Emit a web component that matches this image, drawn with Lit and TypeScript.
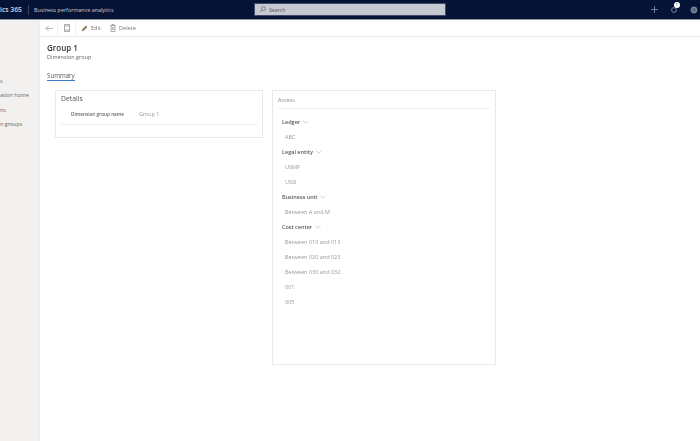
import { LitElement, html, css } from "lit";
import { customElement } from "lit/decorators.js";

const chevron = html`<svg class="chev" width="6" height="4" viewBox="0 0 6 4"><path d="M.4.8l2.6 2.4L5.6.8" fill="none" stroke="#b0b0b0" stroke-width=".6"/></svg>`;

const groups: [string, string[]][] = [
  ["Ledger", ["ABC"]],
  ["Legal entity", ["USMF", "USSI"]],
  ["Business unit", ["Between A and M"]],
  ["Cost center", ["Between 010 and 013", "Between 020 and 023", "Between 030 and 032", "001", "005"]],
];

@customElement("app-root")
export class AppRoot extends LitElement {
  static styles = css`
    :host { display: block; width: 700px; height: 441px; overflow: hidden; background: #fff; font-family: "Open Sans", "Noto Sans", sans-serif; color: #333; }
    .frame { height: 441px; display: flex; flex-direction: column; filter: blur(0.45px); }
    header { height: 20px; flex: none; background: #051436; border-bottom: 1px solid #8d93a5; box-sizing: border-box; display: flex; align-items: center; color: #c9ced8; font-size: 5.4px; }
    .brand { font-size: 6.8px; font-weight: 600; width: 28px; white-space: nowrap; color: #d5d8df; }
    .sep { width: 1px; height: 10px; background: #3b4660; }
    .app { margin-left: 5px; width: 220px; white-space: nowrap; }
    .search { width: 192px; height: 13px; background: #c6c9d0; border: 1px solid #3e4a68; box-sizing: border-box; display: flex; align-items: center; gap: 3px; padding-left: 4px; color: #4a4f5c; font-size: 5.2px; }
    .right { margin-left: auto; display: flex; align-items: center; gap: 13px; padding-right: 2px; }
    .bell { position: relative; display: flex; }
    .badge { position: absolute; top: -5px; left: 3px; width: 6px; height: 6px; border-radius: 50%; background: #fff; color: #051436; font-size: 4px; line-height: 6px; text-align: center; }
    .body { flex: 1; display: flex; min-height: 0; }
    nav { width: 40px; flex: none; background: #f2f1f0; border-right: 1px solid #ecebea; box-sizing: border-box; padding-top: 57px; font-size: 5.4px; color: #666; display: flex; flex-direction: column; gap: 6.4px; line-height: 8px; white-space: nowrap; }
    main { flex: 1; min-width: 0; }
    .toolbar { height: 17px; border-bottom: 1px solid #eceaea; box-sizing: border-box; display: flex; align-items: center; font-size: 5.6px; color: #777; }
    .tool { display: flex; align-items: center; gap: 3px; }
    .back { width: 17px; justify-content: center; border-right: 1px solid #f0f0f0; height: 100%; }
    .pg { width: 17px; justify-content: center; border-right: 1px solid #f0f0f0; height: 100%; }
    .edit { margin-left: 5px; }
    .del { margin-left: 9px; }
    .content { padding: 5px 0 0 7px; }
    h1 { margin: 0; font-size: 8px; line-height: 11px; font-weight: 600; color: #333; }
    .sub { font-size: 5.5px; line-height: 8px; color: #666; }
    .tab { display: inline-block; margin-top: 10px; font-size: 6.2px; line-height: 8px; color: #555; border-bottom: 1px solid #3a7bd0; }
    .cards { display: flex; align-items: flex-start; margin: 7px 0 0 8px; gap: 9px; }
    .card { background: #fff; border: 1px solid #eae9e8; box-sizing: border-box; }
    .details { width: 208px; height: 48px; padding: 3px 5px; }
    .details h2 { margin: 0; font-size: 6.8px; line-height: 10px; font-weight: 400; color: #555; }
    .field { display: flex; align-items: center; height: 12px; margin-top: 4px; padding-left: 10px; border-bottom: 1px solid #efefef; padding-bottom: 4px; box-sizing: content-box; }
    .field .l { width: 68px; font-size: 4.7px; font-weight: 600; color: #666; }
    .field .v { font-size: 5.4px; color: #999; }
    .access { width: 224px; height: 275px; padding: 5px 5px 0; }
    .access h3 { margin: 0; font-size: 5.4px; line-height: 8px; font-weight: 400; color: #888; padding-bottom: 4px; border-bottom: 1px solid #f0efef; }
    .list { padding: 5px 0 0 4px; }
    .g { display: flex; align-items: center; gap: 3px; height: 15px; font-size: 5.5px; font-weight: 600; color: #5a5a5a; }
    .i { height: 15px; display: flex; align-items: center; padding-left: 3px; font-size: 5.5px; color: #999; }
  `;

  render() {
    return html`<div class="frame">
      <header>
        <div class="brand">ics 365</div><div class="sep"></div>
        <div class="app">Business performance analytics</div>
        <div class="search">
          <svg width="7" height="7" viewBox="0 0 8 8"><circle cx="5" cy="3" r="2.3" fill="none" stroke="#555" stroke-width=".7"/><path d="M3.3 4.7L1 7" stroke="#555" stroke-width=".7"/></svg>
          Search
        </div>
        <div class="right">
          <svg width="7" height="7" viewBox="0 0 7 7"><path d="M3.5 0v7M0 3.5h7" stroke="#8a92a6" stroke-width=".8"/></svg>
          <span class="bell"><svg width="6" height="6" viewBox="0 0 6 6"><circle cx="3" cy="3" r="2.4" fill="none" stroke="#9aa1b2" stroke-width=".8"/></svg><span class="badge">1</span></span>
          <svg width="8" height="8" viewBox="0 0 8 8"><circle cx="4" cy="4" r="3.4" fill="#5b647d"/><circle cx="4" cy="4" r="2.6" fill="none" stroke="#8b92a5" stroke-width=".9"/></svg>
        </div>
      </header>
      <div class="body">
        <nav><div>s</div><div>ation home</div><div>ns</div><div>n groups</div></nav>
        <main>
          <div class="toolbar">
            <div class="tool back"><svg width="8" height="7" viewBox="0 0 8 7"><path d="M8 3.5H1M3.7.8L1 3.5l2.7 2.7" fill="none" stroke="#999" stroke-width=".7"/></svg></div>
            <div class="tool pg"><svg width="6" height="8" viewBox="0 0 6 8"><path d="M.5.5h5v7h-5zM.5 2h5M.5 6h5" fill="none" stroke="#888" stroke-width=".7"/></svg></div>
            <div class="tool edit"><svg width="7" height="7" viewBox="0 0 7 7"><path d="M.5 6.5l1-2.5L5 .6l1.4 1.4L3 5.5z" fill="#8a7a55"/></svg>Edit</div>
            <div class="tool del"><svg width="6" height="8" viewBox="0 0 6 8"><path d="M.4 1.5h5.2M1 1.5v6h4v-6M2 1.5V.5h2v1M2.3 3v3M3.7 3v3" fill="none" stroke="#777" stroke-width=".6"/></svg>Delete</div>
          </div>
          <div class="content">
            <h1>Group 1</h1>
            <div class="sub">Dimension group</div>
            <div class="tab">Summary</div>
            <div class="cards">
              <section class="card details">
                <h2>Details</h2>
                <div class="field"><span class="l">Dimension group name</span><span class="v">Group 1</span></div>
              </section>
              <section class="card access">
                <h3>Access</h3>
                <div class="list">
                  ${groups.map(([g, items]) => html`<div class="g">${g}${chevron}</div>${items.map((i) => html`<div class="i">${i}</div>`)}`)}
                </div>
              </section>
            </div>
          </div>
        </main>
      </div>
    </div>`;
  }
}
